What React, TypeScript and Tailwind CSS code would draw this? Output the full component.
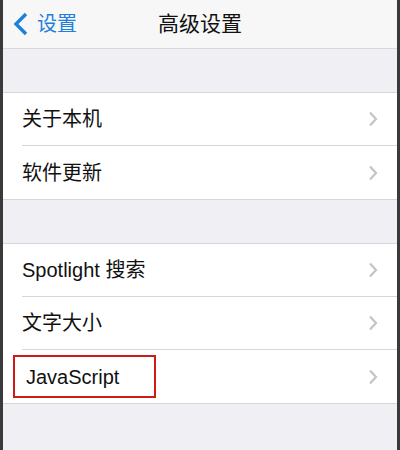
const groups = [
    ['关于本机', '软件更新'],
    ['Spotlight 搜索', '文字大小', 'JavaScript'],
];

function Row({ label, last, boxed }: { label: string; last: boolean; boxed: boolean }) {
    return (
        <div className="flex h-[53px] items-stretch bg-white">
            <div className={`ml-[19px] flex flex-1 items-center justify-between ${last ? '' : 'border-b border-[#d6d6da]'}`}>
                <span
                    className={
                        boxed
                            ? '-ml-[9px] flex h-[43px] w-[143px] items-center border-2 border-[#d01a1a] pl-[11px] text-[20px] text-[#111]'
                            : 'text-[20px] text-[#111]'
                    }
                >
                    {label}
                </span>
                <svg width="10" height="16" viewBox="0 0 10 16" className="mr-[19px]">
                    <polyline points="2,1.5 8,8 2,14.5" fill="none" stroke="#c4c4c8" strokeWidth="2.2" />
                </svg>
            </div>
        </div>
    );
}

export default function App() {
    return (
        <div
            className="flex h-[450px] w-[400px] overflow-hidden bg-[#3a3a3a]"
            style={{ fontFamily: '"Liberation Sans", "Noto Sans CJK SC", sans-serif' }}
        >
            <div className="ml-[3px] mr-[3px] flex flex-1 flex-col bg-[#efeff4]">
                <div className="relative flex h-[49px] items-center border-b border-[#d8d8dc] bg-[#f7f7f7]">
                    <div className="flex items-center text-[#1f7fdc]">
                        <svg width="16" height="24" viewBox="0 0 16 24" className="ml-[10px]">
                            <polyline points="13,2 3,12 13,22" fill="none" stroke="#1f7fdc" strokeWidth="3.4" />
                        </svg>
                        <span className="ml-[8px] text-[20px]">设置</span>
                    </div>
                    <span className="absolute left-0 right-0 text-center text-[21px] text-[#111]">高级设置</span>
                </div>
                {groups.map((rows, gi) => (
                    <div key={gi} className="mt-[43px] border-y border-[#d6d6da]">
                        {rows.map((label, i) => (
                            <Row key={label} label={label} last={i === rows.length - 1} boxed={label === 'JavaScript'} />
                        ))}
                    </div>
                ))}
            </div>
        </div>
    );
}
